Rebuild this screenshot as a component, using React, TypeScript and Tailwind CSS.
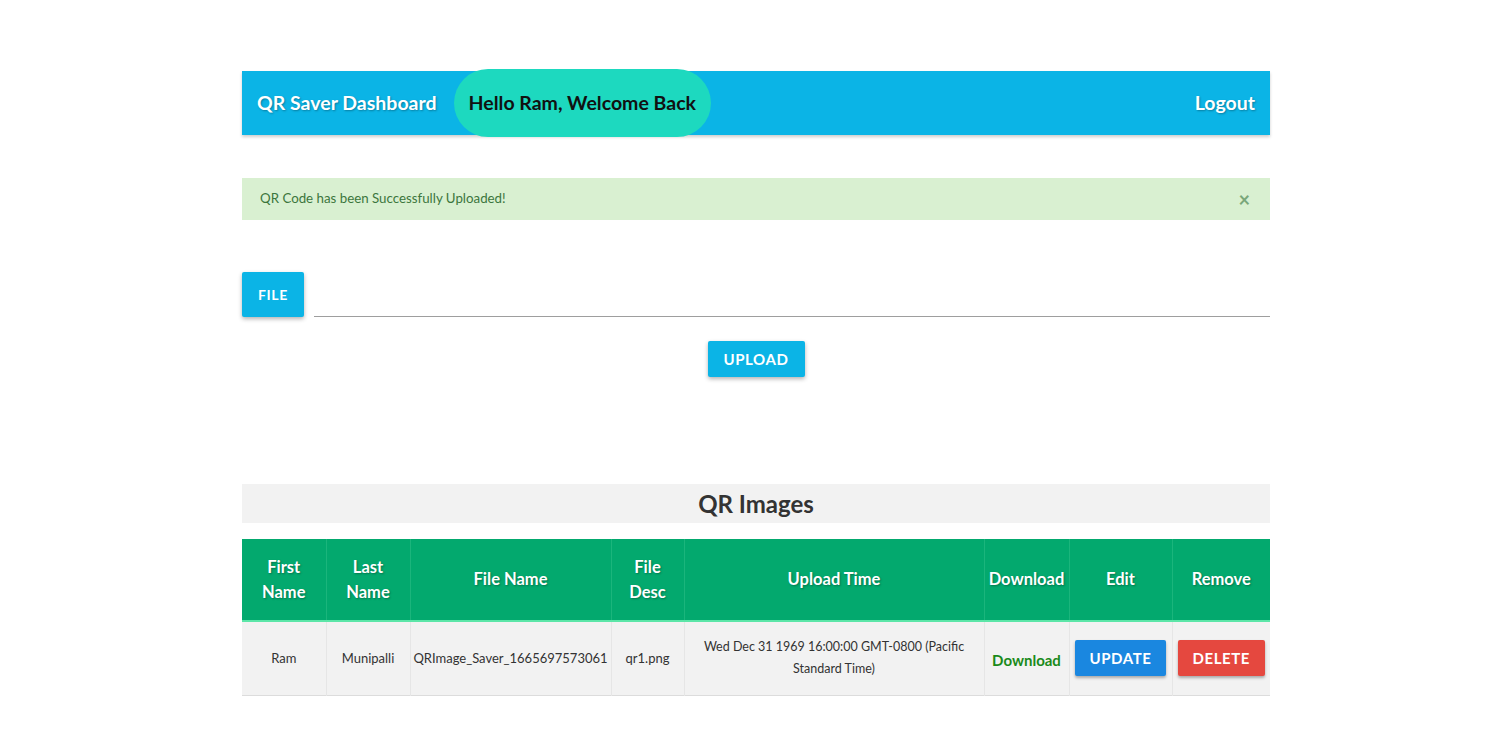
import React from "react";

const rows = [
  {
    first: "Ram",
    last: "Munipalli",
    fileName: "QRImage_Saver_1665697573061",
    desc: "qr1.png",
  },
];

export default function App() {
  const shadow = "[text-shadow:1px_1px_2px_rgba(0,0,0,0.3)]";

  return (
    <div className="min-h-[744px] bg-white font-['Lato','Open_Sans',sans-serif] text-[#333]">
      <div className="ml-[242px] w-[1028px] pt-[71px]">
        {/* navbar */}
        <nav className="flex h-[64px] items-center bg-[#0bb4e6] px-[15px] shadow-[0_2px_3px_rgba(0,0,0,0.2)]">
          <span className={`text-[19.5px] font-bold text-white ${shadow}`}>QR Saver Dashboard</span>
          <span className="ml-[17px] flex h-[68px] items-center rounded-full bg-[#1dd9bf] px-[15px] text-[19.5px] font-bold text-[#111]">
            Hello Ram, Welcome Back
          </span>
          <span className={`ml-auto text-[19.5px] font-bold text-white ${shadow}`}>Logout</span>
        </nav>

        {/* alert */}
        <div className="mt-[43px] flex h-[42px] items-center justify-between bg-[#d9f0d1] pl-[18px] pr-[20px] text-[13.3px] text-[#3c763d]">
          <span>QR Code has been Successfully Uploaded!</span>
          <span className="text-[20px] font-bold leading-none text-[#7aa77a]">×</span>
        </div>

        {/* file input */}
        <div className="mt-[52px] flex items-end gap-[10px]">
          <button className="h-[45px] w-[62px] rounded-[2px] bg-[#0bb4e6] text-[14px] font-bold tracking-[0.05em] text-white shadow-[0_2px_4px_rgba(0,0,0,0.3)]">
            FILE
          </button>
          <div className="h-[1px] flex-1 bg-[#9e9e9e]" />
        </div>

        <div className="mt-[24px] flex justify-center">
          <button className="h-[36px] w-[97px] rounded-[2px] bg-[#0bb4e6] text-[15px] font-bold tracking-[0.04em] text-white shadow-[0_2px_4px_rgba(0,0,0,0.3)]">
            UPLOAD
          </button>
        </div>

        {/* QR images */}
        <div className="mt-[107px] flex h-[39px] items-center justify-center bg-[#f2f2f2] text-[24px] font-bold text-[#333]">
          QR Images
        </div>

        <table className="mt-[16px] w-full table-fixed border-collapse text-center">
          <colgroup>
            <col className="w-[84px]" />
            <col className="w-[84px]" />
            <col className="w-[201px]" />
            <col className="w-[73px]" />
            <col className="w-[300px]" />
            <col className="w-[85px]" />
            <col className="w-[103px]" />
            <col className="w-[98px]" />
          </colgroup>
          <thead>
            <tr className={`h-[82px] border-b-[2px] border-[#5ce6a8] bg-[#03a96e] text-[16.5px] font-bold leading-[25px] text-white ${shadow}`}>
              <th className="border-r border-[#1bb57c] px-1">First<br />Name</th>
              <th className="border-r border-[#1bb57c] px-1">Last<br />Name</th>
              <th className="border-r border-[#1bb57c] px-1">File Name</th>
              <th className="border-r border-[#1bb57c] px-1">File<br />Desc</th>
              <th className="border-r border-[#1bb57c] px-1">Upload Time</th>
              <th className="border-r border-[#1bb57c] px-1">Download</th>
              <th className="border-r border-[#1bb57c] px-1">Edit</th>
              <th className="px-1">Remove</th>
            </tr>
          </thead>
          <tbody>
            {rows.map((r) => (
              <tr key={r.fileName} className="h-[74px] border-b border-[#dcdcdc] bg-[#f2f2f2] text-[13px] leading-[22px] text-[#333]">
                <td className="border-r border-[#e6e6e6]">{r.first}</td>
                <td className="border-r border-[#e6e6e6]">{r.last}</td>
                <td className="border-r border-[#e6e6e6]">{r.fileName}</td>
                <td className="border-r border-[#e6e6e6]">{r.desc}</td>
                <td className="border-r border-[#e6e6e6] px-3 text-[12.5px]">
                  Wed Dec 31 1969 16:00:00 GMT-0800 (Pacific<br />Standard Time)
                </td>
                <td className="border-r border-[#e6e6e6] pt-[4px] text-[15px] font-bold text-[#1a8a1a]">Download</td>
                <td className="border-r border-[#e6e6e6]">
                  <button className="h-[36px] w-[91px] rounded-[2px] bg-[#1a87e0] text-[15px] font-bold tracking-[0.04em] text-white shadow-[0_2px_3px_rgba(0,0,0,0.3)]">
                    UPDATE
                  </button>
                </td>
                <td>
                  <button className="h-[36px] w-[87px] rounded-[2px] bg-[#e5483f] text-[15px] font-bold tracking-[0.04em] text-white shadow-[0_2px_3px_rgba(0,0,0,0.3)]">
                    DELETE
                  </button>
                </td>
              </tr>
            ))}
          </tbody>
        </table>
      </div>
    </div>
  );
}
